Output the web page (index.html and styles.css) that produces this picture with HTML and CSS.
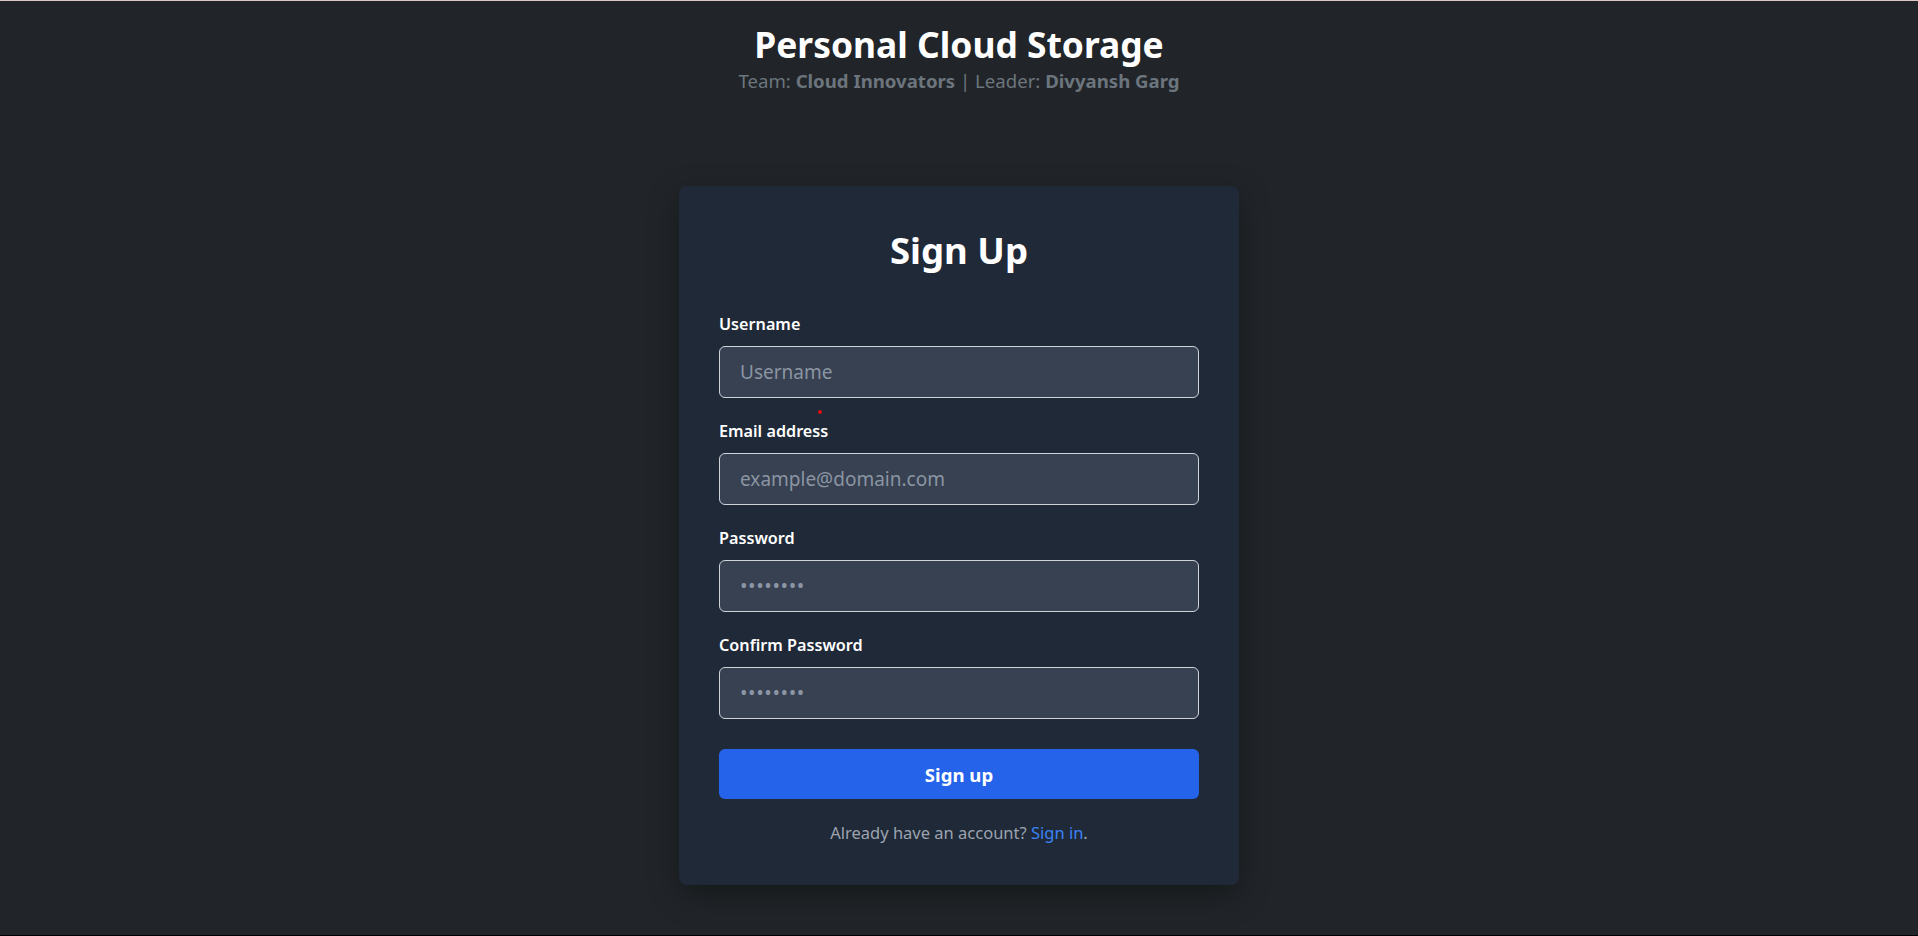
FILE: index.html
```html
<!DOCTYPE html>
<html lang="en">
<head>
<meta charset="utf-8">
<title>Personal Cloud Storage - Sign Up</title>
<link rel="stylesheet" href="styles.css">
</head>
<body>
<header class="site-header">
  <h1 class="site-title">Personal Cloud Storage</h1>
  <p class="site-subtitle">Team: <strong>Cloud Innovators</strong> | Leader: <strong>Divyansh Garg</strong></p>
</header>
<main class="main">
  <section class="card">
    <span class="marker"></span>
    <h2 class="card-title">Sign Up</h2>
    <form class="form">
      <div class="field">
        <label class="label" for="username">Username</label>
        <input class="input" id="username" type="text" placeholder="Username">
      </div>
      <div class="field">
        <label class="label" for="email">Email address</label>
        <input class="input" id="email" type="email" placeholder="example@domain.com">
      </div>
      <div class="field">
        <label class="label" for="password">Password</label>
        <input class="input input-pw" id="password" type="password" placeholder="••••••••">
      </div>
      <div class="field">
        <label class="label" for="confirm">Confirm Password</label>
        <input class="input input-pw" id="confirm" type="password" placeholder="••••••••">
      </div>
      <button class="btn" type="button">Sign up</button>
    </form>
    <p class="footer-text">Already have an account? <a class="link" href="#">Sign in</a>.</p>
  </section>
</main>
</body>
</html>
```
FILE: styles.css
```css
html, body {
  margin: 0;
  padding: 0;
}
body {
  background: #212529;
  color: #ffffff;
  font-family: "Noto Sans", "Open Sans", sans-serif;
  height: 936px;
  box-sizing: border-box;
  border-top: 1px solid #dcc6c6;
  border-bottom: 1px solid #000000;
  overflow: hidden;
}
.site-header {
  text-align: center;
  padding-top: 22px;
}
.site-title {
  margin: 0;
  font-size: 35.4px;
  line-height: 43px;
  font-weight: 700;
  color: #ffffff;
}
.site-subtitle {
  margin: 1px 0 0;
  font-size: 18.6px;
  line-height: 28px;
  color: #6c757d;
}
.site-subtitle strong {
  font-weight: 700;
}
.main {
  display: flex;
  justify-content: center;
  margin-top: 91px;
}
.card {
  position: relative;
  width: 560px;
  box-sizing: border-box;
  padding: 42px 40px 40px;
  background: #1f2937;
  border-radius: 8px;
  box-shadow: 0 10px 30px rgba(0, 0, 0, 0.35);
}
.marker {
  position: absolute;
  left: 139px;
  top: 224px;
  width: 4px;
  height: 4px;
  border-radius: 50%;
  background: #e01010;
}
.card-title {
  margin: 0 0 40px;
  text-align: center;
  font-size: 36.5px;
  line-height: 44px;
  font-weight: 700;
}
.form {
  display: flex;
  flex-direction: column;
  gap: 21px;
}
.field {
  display: flex;
  flex-direction: column;
  gap: 10px;
}
.label {
  font-size: 16.2px;
  line-height: 24px;
  font-weight: 600;
  color: #ffffff;
}
.input {
  box-sizing: border-box;
  height: 52px;
  width: 100%;
  padding: 0 20px;
  background: #374151;
  border: 1px solid #cfd3d9;
  border-radius: 6px;
  color: #ffffff;
  font-family: inherit;
  font-size: 19px;
  outline: none;
}
.input::placeholder {
  color: #8b95a3;
}
.input-pw::placeholder {
  font-size: 20px;
  letter-spacing: 0.6px;
}
.btn {
  margin-top: 9px;
  height: 50px;
  border: none;
  border-radius: 6px;
  background: #2563eb;
  color: #ffffff;
  font-family: inherit;
  font-size: 18.6px;
  font-weight: 700;
  cursor: pointer;
}
.footer-text {
  margin: 22px 0 0;
  text-align: center;
  font-size: 16.5px;
  line-height: 24px;
  color: #9ca3af;
}
.link {
  color: #3b82f6;
  text-decoration: none;
}
```
